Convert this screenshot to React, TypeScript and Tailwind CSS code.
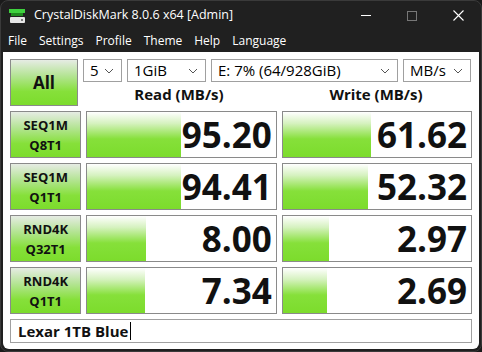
const rows = [
  { a: 'SEQ1M', b: 'Q8T1', read: '95.20', rw: 94, write: '61.62', ww: 88 },
  { a: 'SEQ1M', b: 'Q1T1', read: '94.41', rw: 94, write: '52.32', ww: 85 },
  { a: 'RND4K', b: 'Q32T1', read: '8.00', rw: 59, write: '2.97', ww: 46 },
  { a: 'RND4K', b: 'Q1T1', read: '7.34', rw: 58, write: '2.69', ww: 44 },
]

const btn = 'bg-[linear-gradient(to_bottom,#e6ece4_0%,#b4e494_35%,#86e03a_70%,#7cdc2c_100%)] border border-[#8a8a8a]'
const bar = 'bg-[linear-gradient(to_bottom,#ffffff_0%,#d6f2c0_25%,#86e03a_60%,#7cdc2c_100%)]'

function Chevron() {
  return (
    <svg className="w-[10px] h-[6px]" viewBox="0 0 10 6" fill="none" stroke="#555" strokeWidth="1">
      <path d="M1 1l4 4 4-4" />
    </svg>
  )
}

function Select({ w, label }: { w: string; label: string }) {
  return (
    <div className={`${w} h-[23px] border border-[#a0a0a0] bg-white flex items-center justify-between pl-[6px] pr-[7px] text-[15px] text-black`}>
      <span>{label}</span>
      <Chevron />
    </div>
  )
}

function Cell({ value, width }: { value: string; width: number }) {
  return (
    <div className="relative w-[192px] h-[47px] border border-[#8a8a8a] bg-white">
      <div className={`absolute left-0 top-0 bottom-0 ${bar}`} style={{ width }} />
      <div className="relative h-full flex items-center justify-end pr-[4px] text-[35px] font-bold leading-none text-[#111]">
        {value}
      </div>
    </div>
  )
}

export default function App() {
  return (
    <div className="w-[482px] h-[352px] bg-[#1a1a1a] font-['Open_Sans',sans-serif] overflow-hidden">
      <div className="h-[352px] rounded-[8px] bg-[#202020] border border-[#3a3a3a] flex flex-col overflow-hidden">
        {/* Title bar */}
        <div className="h-[29px] flex items-center pl-[7px] text-white text-[12.5px]">
          <svg className="w-[18px] h-[16px] mr-[8px]" viewBox="0 0 18 16">
            <rect x="1" y="1" width="16" height="4" fill="#3ed13e" />
            <rect x="3" y="5" width="12" height="3" fill="#1e8a1e" />
            <rect x="2" y="9" width="15" height="6" rx="1" fill="#e6e6e6" />
            <rect x="13" y="11" width="2" height="2" fill="#7a7a7a" />
          </svg>
          <span>CrystalDiskMark 8.0.6 x64 [Admin]</span>
          <div className="ml-auto flex items-center">
            <div className="w-[46px] h-[29px] flex items-center justify-center">
              <div className="w-[10px] h-px bg-white" />
            </div>
            <div className="w-[46px] h-[29px] flex items-center justify-center">
              <div className="w-[10px] h-[10px] border border-[#777]" />
            </div>
            <div className="w-[46px] h-[29px] flex items-center justify-center">
              <svg className="w-[11px] h-[11px]" viewBox="0 0 11 11" stroke="white" strokeWidth="1.1">
                <path d="M0.5 0.5l10 10M10.5 0.5l-10 10" />
              </svg>
            </div>
          </div>
        </div>
        {/* Menu bar */}
        <div className="h-[22px] flex items-center pl-[7px] gap-[12px] text-white text-[12px]">
          <span>File</span>
          <span>Settings</span>
          <span>Profile</span>
          <span>Theme</span>
          <span>Help</span>
          <span>Language</span>
        </div>
        {/* Content */}
        <div className="flex-1 bg-white mx-[2px] mb-[2px] rounded-b-[6px] px-[7px] pt-[7px]">
          <div className="flex gap-[5px]">
            <div className={`w-[72px] h-[47px] ${btn} flex items-center justify-center text-[17px] font-bold text-[#111]`}>
              All
            </div>
            <div className="flex-1 flex flex-col">
              <div className="flex gap-[5px]">
                <Select w="w-[39px]" label="5" />
                <Select w="w-[79px]" label="1GiB" />
                <Select w="w-[187px]" label="E: 7% (64/928GiB)" />
                <Select w="w-[68px]" label="MB/s" />
              </div>
              <div className="flex-1 flex items-center text-[15px] font-bold text-[#111]">
                <div className="w-[192px] text-center">Read (MB/s)</div>
                <div className="w-[192px] ml-[5px] text-center">Write (MB/s)</div>
              </div>
            </div>
          </div>
          <div className="flex flex-col gap-[5px] mt-[5px]">
            {rows.map((r, i) => (
              <div key={i} className="flex gap-[5px]">
                <div className={`w-[72px] h-[47px] ${btn} flex flex-col items-center justify-center text-[13px] font-bold leading-[20px] text-[#111]`}>
                  <span>{r.a}</span>
                  <span>{r.b}</span>
                </div>
                <Cell value={r.read} width={r.rw} />
                <Cell value={r.write} width={r.ww} />
              </div>
            ))}
          </div>
          <div className="mt-[5px] h-[24px] border border-[#a0a0a0] flex items-center pl-[7px] text-[15px] font-bold text-[#111]">
            <span>Lexar 1TB Blue</span>
            <span className="w-px h-[18px] bg-black ml-[2px]" />
          </div>
        </div>
      </div>
    </div>
  )
}
